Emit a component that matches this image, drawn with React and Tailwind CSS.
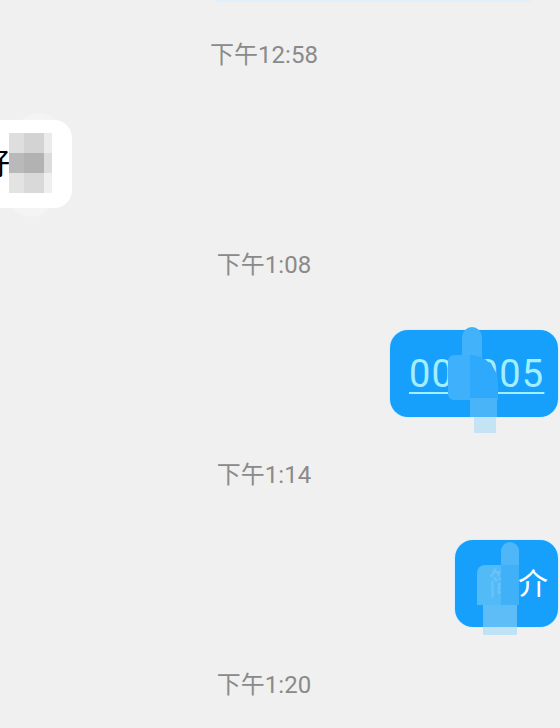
import React from 'react'

const font = { fontFamily: '"Roboto", "Noto Sans CJK SC", sans-serif' }

const Time = ({ children, className = '' }) => (
  <div className={`flex justify-center pr-[32px] ${className}`}>
    <span className="text-[24px] leading-8 text-[#8a8a8a]">{children}</span>
  </div>
)

const pixelCells = [
  '#dedede', '#d3d3d3', '#ebebeb',
  '#b9b9b9', '#b2b2b2', '#dcdcdc',
  '#e3e3e3', '#d9d9d9', '#efefef',
]

export default function App() {
  return (
    <div
      className="relative w-[560px] h-[728px] overflow-hidden bg-[#f0f0f0] flex flex-col"
      style={font}
    >
      {/* bottom edge of previous bubble */}
      <div className="h-[2px] ml-[215px] w-[315px] bg-[#e1effa]" />

      <Time className="mt-[37px]">下午12:58</Time>

      {/* incoming message, cut off on the left */}
      <div className="mt-[49px] flex">
        <div className="relative -ml-[40px] w-[112px] h-[88px] rounded-[18px] bg-white flex items-center pl-[20px]">
          <div className="absolute left-[52px] -top-[7px] w-[46px] h-[104px] rounded-[22px] bg-white/30 rotate-[8deg]" />
          <span className="relative text-[30px] text-black leading-none">好</span>
          <div className="absolute left-[49px] top-[13px] grid grid-cols-[15px_20px_8px] grid-rows-[20px_20px_20px]">
            {pixelCells.map((c, i) => (
              <div key={i} style={{ background: c }} />
            ))}
          </div>
        </div>
      </div>

      <Time className="mt-[41px]">下午1:08</Time>

      {/* outgoing link */}
      <div className="mt-[49px] flex justify-end pr-[2px]">
        <div className="relative w-[168px] h-[87px] rounded-[18px] bg-[#17a0fb] ring-1 ring-[#d5f0ff] flex items-center pl-[19px]">
          <span className="text-[38px] leading-none tracking-[1.2px] text-[#a3eeff] underline decoration-2 underline-offset-[5px]">
            000005
          </span>
          <div className="absolute left-[72px] -top-[3px] w-[20px] h-[34px] rounded-t-full bg-[#42b2fb]" />
          <div className="absolute left-[58px] top-[25px] w-[24px] h-[45px] rounded-l-[6px] bg-[#3fb0fb]" />
          <div className="absolute left-[80px] top-[25px] w-[28px] h-[45px] rounded-tr-full bg-[#2ea9fb]" />
          <div className="absolute left-[80px] top-[68px] w-[27px] h-[19px] bg-[#49b4f8]" />
          <div className="absolute left-[84px] top-[87px] w-[22px] h-[16px] bg-[#c4e3f4]" />
        </div>
      </div>

      <Time className="mt-[42px]">下午1:14</Time>

      {/* outgoing text */}
      <div className="mt-[49px] flex justify-end pr-[2px]">
        <div className="relative w-[103px] h-[87px] rounded-[18px] bg-[#17a0fb] ring-1 ring-[#d5f0ff] flex items-center pl-[33px]">
          <span className="text-[30px] leading-none text-white">简介</span>
          <div className="absolute left-[46px] top-[2px] w-[18px] h-[34px] rounded-t-full bg-[#4fb7f8]" />
          <div className="absolute left-[22px] top-[25px] w-[24px] h-[40px] rounded-tl-[8px] bg-[#5abcf7]/90" />
          <div className="absolute left-[46px] top-[25px] w-[18px] h-[40px] bg-[#40b1f9]" />
          <div className="absolute left-[28px] top-[65px] w-[34px] h-[22px] bg-[#5ebdf6]" />
          <div className="absolute left-[28px] top-[87px] w-[34px] h-[8px] bg-[#bfe2f5]" />
        </div>
      </div>

      <Time className="mt-[42px]">下午1:20</Time>
    </div>
  )
}
